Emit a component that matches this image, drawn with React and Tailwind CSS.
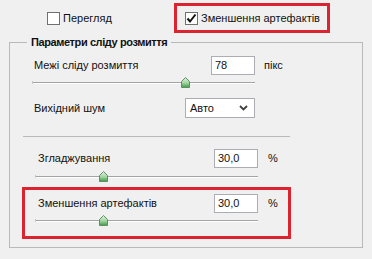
import { useState } from "react";

function Check({ checked }) {
  return (
    <span className="w-[13px] h-[13px] shrink-0 border border-[#707070] bg-white flex items-center justify-center">
      {checked && (
        <svg width="11" height="11" viewBox="0 0 11 11">
          <path d="M1.5 5.5 L4 8.5 L9.5 1.5" fill="none" stroke="#111" strokeWidth="2" />
        </svg>
      )}
    </span>
  );
}

function Thumb() {
  return (
    <svg width="9" height="11" viewBox="0 0 9 11">
      <defs>
        <linearGradient id="tg" x1="0" y1="0" x2="0" y2="1">
          <stop offset="0" stopColor="#e4f4e4" />
          <stop offset="0.55" stopColor="#9fd49f" />
          <stop offset="1" stopColor="#3c9a46" />
        </linearGradient>
      </defs>
      <path d="M4.5 0.5 L8.5 4.5 L8.5 10.5 L0.5 10.5 L0.5 4.5 Z" fill="url(#tg)" stroke="#5e8f64" />
    </svg>
  );
}

function Slider({ pos, line = 7, className = "" }) {
  return (
    <div className={"relative h-[14px] w-[223px] " + className}>
      <div className="absolute left-0 right-0 h-[2px] border-t border-[#a3a3a3] border-b border-b-white" style={{ top: line }} />
      <div className="absolute left-0 w-[1px] h-[3px] bg-[#c8c8c8]" style={{ top: line - 1 }} />
      <div className="absolute" style={{ left: pos - 4, top: line - 5 }}>
        <Thumb />
      </div>
    </div>
  );
}

function Field({ value }) {
  return (
    <div className="w-[44px] h-[19px] shrink-0 bg-white border border-[#abadb3] flex items-center pl-[3px]">
      {value}
    </div>
  );
}

export default function App() {
  const [preview] = useState(false);

  return (
    <div className="w-[372px] h-[259px] bg-[#f0f0f0] text-[11px] text-[#111] font-['Liberation_Sans',Arial,sans-serif] whitespace-nowrap overflow-hidden">
      {/* checkboxes */}
      <div className="flex items-center pt-[3px] h-[33px]">
        <label className="ml-[47px] w-[127px] flex items-center gap-[3px]">
          <Check checked={preview} />
          <span>Перегляд</span>
        </label>
        <div className="w-[156px] h-[30px] border-[3px] border-[#dc2430] flex items-center pl-[8px] gap-[3px]">
          <Check checked />
          <span>Зменшення артефактів</span>
        </div>
      </div>

      {/* group */}
      <fieldset className="mt-[2px] ml-[9px] w-[354px] border border-[#b9b9b9] pb-[8px]">
        <legend className="ml-[17px] px-[4px] leading-[14px] font-bold tracking-[-0.4px]">Параметри сліду розмиття</legend>

        <div className="pl-[24px] mt-[7px] flex items-center h-[19px]">
          <span className="w-[177px]">Межі сліду розмиття</span>
          <Field value="78" />
          <span className="ml-[9px]">пікс</span>
        </div>
        <Slider pos={153} className="ml-[22px]" />

        <div className="pl-[24px] mt-[9px] flex items-center h-[20px]">
          <span className="w-[151px]">Вихідний шум</span>
          <div className="w-[70px] h-[20px] bg-white border border-[#abadb3] flex items-center justify-between pl-[4px] pr-[6px]">
            <span>Авто</span>
            <svg width="9" height="6" viewBox="0 0 9 6">
              <path d="M1 1 L4.5 4.5 L8 1" fill="none" stroke="#404040" strokeWidth="1.8" />
            </svg>
          </div>
        </div>

        <div className="ml-[12px] w-[269px]">
          <div className="mt-[18px] mx-[1px] border-t border-[#b9b9b9]" />

          <div className="pl-[16px] mt-[12px] flex items-center h-[19px]">
            <span className="w-[176px]">Згладжування</span>
            <Field value="30,0" />
            <span className="ml-[10px]">%</span>
          </div>
          <Slider pos={68} line={8} className="ml-[13px]" />

          <div className="mt-[5px] h-[52px] border-[3px] border-[#dc2430]">
            <div className="pl-[13px] mt-[4px] flex items-center h-[19px]">
              <span className="w-[176px]">Зменшення артефактів</span>
              <Field value="30,0" />
              <span className="ml-[10px]">%</span>
            </div>
            <Slider pos={68} className="ml-[10px]" />
          </div>
        </div>
      </fieldset>
    </div>
  );
}
